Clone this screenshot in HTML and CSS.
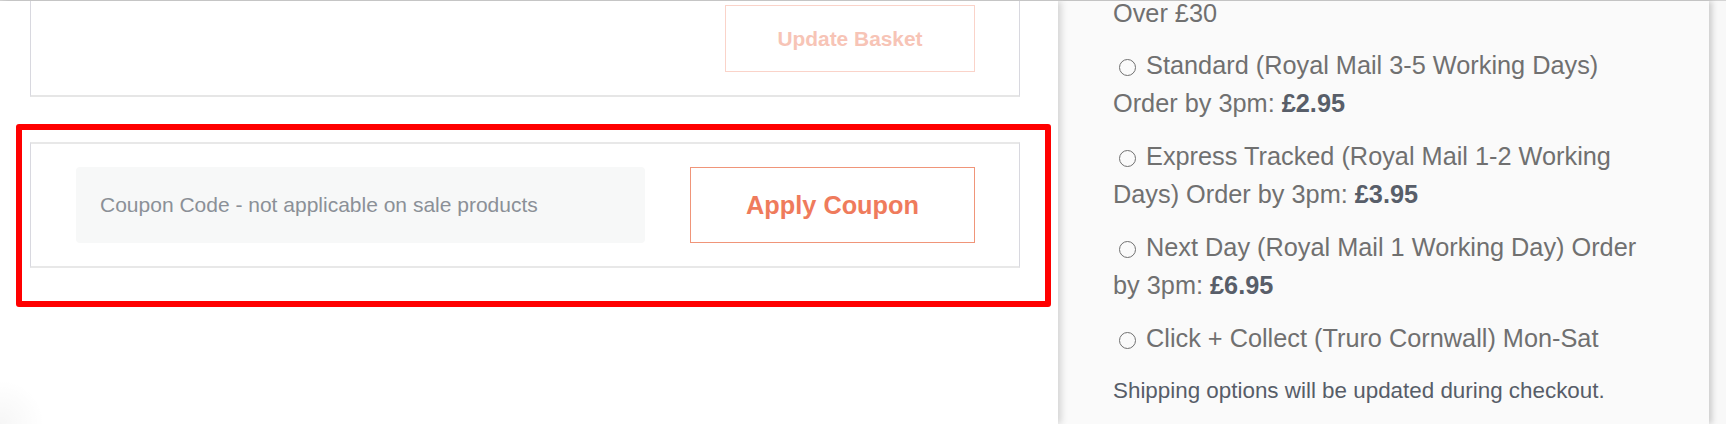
FILE: index.html
```html
<!DOCTYPE html>
<html lang="en">
<head>
<meta charset="utf-8">
<title>Basket</title>
<link rel="stylesheet" href="styles.css">
</head>
<body>
<div class="page">
  <main class="basket">
    <div class="card card-actions">
      <button class="btn btn-update" type="button" disabled>Update Basket</button>
    </div>
    <div class="card card-coupon">
      <input class="coupon-input" type="text" placeholder="Coupon Code - not applicable on sale products">
      <button class="btn btn-apply" type="button">Apply Coupon</button>
    </div>
    <div class="highlight"></div>
  </main>
  <aside class="totals">
    <p class="line">Over £30</p>
    <p class="line"><span class="radio"></span> Standard (Royal Mail 3-5 Working Days) Order by 3pm: <strong>£2.95</strong></p>
    <p class="line"><span class="radio"></span> Express Tracked (Royal Mail 1-2 Working Days) Order by 3pm: <strong>£3.95</strong></p>
    <p class="line"><span class="radio"></span> Next Day (Royal Mail 1 Working Day) Order by 3pm: <strong>£6.95</strong></p>
    <p class="line"><span class="radio"></span> Click + Collect (Truro Cornwall) Mon-Sat</p>
    <p class="note">Shipping options will be updated during checkout.</p>
  </aside>
</div>
</body>
</html>
```

FILE: styles.css
```css
html, body {
  margin: 0;
  padding: 0;
}
body {
  background: #f8f8f8;
  font-family: "Liberation Sans", Arial, sans-serif;
  overflow: hidden;
  height: 424px;
}
.page {
  display: flex;
  border-top: 1px solid #d4d4d4;
  height: 423px;
}
.basket {
  position: relative;
  z-index: 2;
  width: 1058px;
  flex: none;
  background: #fff radial-gradient(circle at 0 100%, rgba(0,0,0,0.035), rgba(0,0,0,0) 45px);
  box-shadow: 3px 0 7px rgba(0,0,0,0.16);
  padding-left: 30px;
  box-sizing: border-box;
}
.card {
  width: 990px;
  box-sizing: border-box;
  display: flex;
  background: #fff;
}
.card-actions {
  justify-content: flex-end;
  border-left: 1px solid #d8d8df;
  border-right: 1px solid #d8d8df;
  border-bottom: 2px solid #e6e6e6;
  padding: 4px 44px 23px 45px;
}
.card-coupon {
  margin-top: 45px;
  align-items: stretch;
  gap: 45px;
  border: 1px solid #d8d8df;
  border-top: 2px solid #e8e8e8;
  border-bottom: 2px solid #e8e8e8;
  padding: 23px 44px 23px 45px;
}
.btn {
  font-family: "Liberation Sans", Arial, sans-serif;
  font-weight: bold;
  background: #fff;
  cursor: pointer;
  box-sizing: border-box;
  padding: 0;
}
.btn-update {
  width: 250px;
  height: 67px;
  font-size: 20.9px;
  color: #f7c4b6;
  border: 1px solid #fad3c9;
}
.btn-apply {
  width: 285px;
  height: 76px;
  flex: none;
  font-size: 25.3px;
  color: #ef7b5c;
  border: 1px solid #f09579;
}
.coupon-input {
  flex: 1;
  height: 76px;
  box-sizing: border-box;
  border: none;
  border-radius: 4px;
  background: #f7f8f8;
  padding: 0 0 0 24px;
  font-family: "Liberation Sans", Arial, sans-serif;
  font-size: 21px;
  color: #555;
  outline: none;
}
.coupon-input::placeholder {
  color: #8b9097;
  opacity: 1;
}
.highlight {
  position: absolute;
  left: 16px;
  top: 123px;
  width: 1035px;
  height: 183px;
  box-sizing: border-box;
  border: 6px solid #ff0000;
  border-radius: 3px;
  pointer-events: none;
}
.totals {
  position: relative;
  z-index: 1;
  width: 651px;
  flex: none;
  background: #fafafa;
  box-shadow: 3px 0 6px rgba(0,0,0,0.18);
  padding: 0 49px 0 55px;
  box-sizing: border-box;
  color: #707070;
  font-size: 25.3px;
  line-height: 38px;
}
.totals p {
  margin: 15px 0 0;
}
.totals p:first-child {
  margin-top: -7px;
}
.totals p:nth-child(2) {
  margin-top: 14px;
}
.totals strong {
  color: #585e69;
}
.radio {
  display: inline-block;
  width: 17px;
  height: 17px;
  margin-left: 6px;
  margin-right: 3px;
  border: 1.5px solid #707070;
  border-radius: 50%;
  box-sizing: border-box;
  vertical-align: -2px;
}
.note {
  font-size: 22.4px;
  color: #575d68;
}
```
